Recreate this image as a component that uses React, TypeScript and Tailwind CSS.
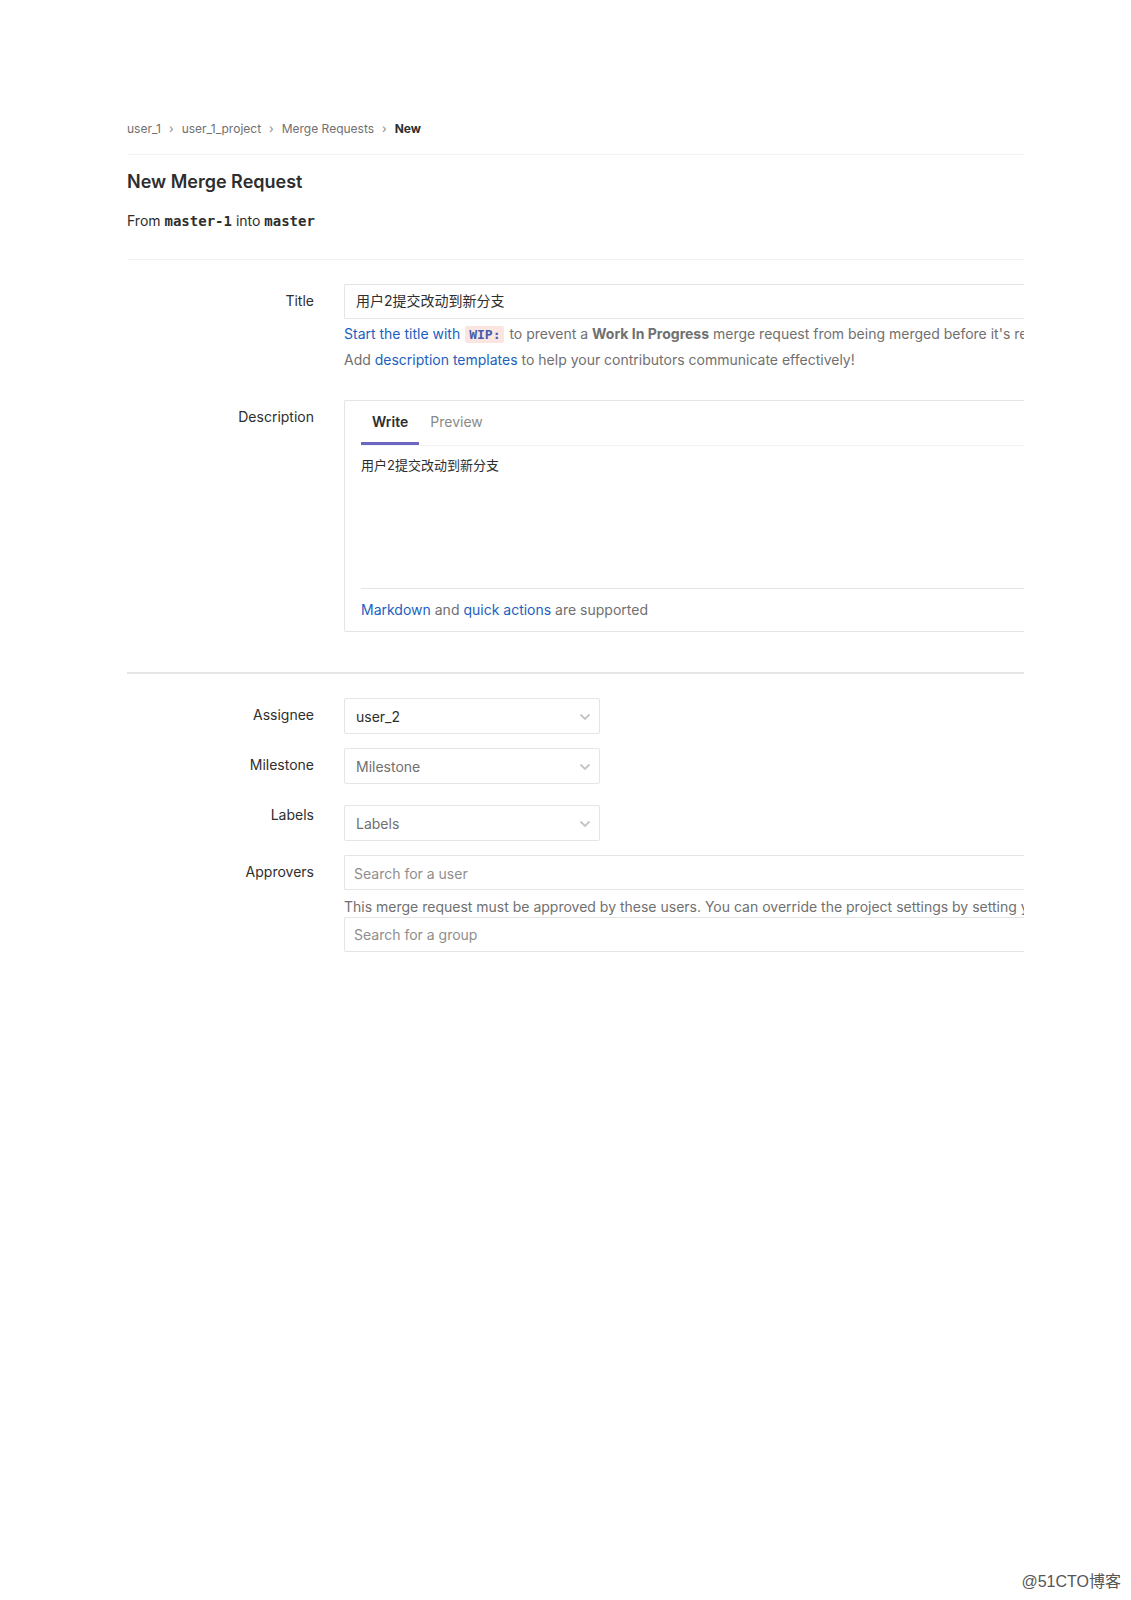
import React from "react";

const sans = "font-['Inter','Noto_Sans_CJK_SC',sans-serif]";

function FormRow({
  id,
  label,
  labelClass = "pt-[7px]",
  className = "",
  children,
}: {
  id: string;
  label: string;
  labelClass?: string;
  className?: string;
  children: React.ReactNode;
}) {
  return (
    <div className={`flex gap-[30px] ${className}`}>
      <label htmlFor={id} className={`w-[187px] shrink-0 text-right text-[#2e2e2e] ${labelClass}`}>
        {label}
      </label>
      <div className="min-w-0 flex-1">{children}</div>
    </div>
  );
}

function Dropdown({ id, value, valueClass }: { id: string; value: string; valueClass: string }) {
  return (
    <div className="relative w-64">
      <select
        id={id}
        defaultValue={value}
        className={`block h-9 w-full appearance-none rounded-xs border border-[#e5e5e5] bg-white pt-px pr-8 pl-[11px] ${valueClass}`}
      >
        <option>{value}</option>
      </select>
      <svg
        className="pointer-events-none absolute top-[15px] right-[9px] h-2 w-3"
        viewBox="0 0 12 8"
        fill="none"
        stroke="#c4c4c4"
        strokeWidth="1.8"
        aria-hidden="true"
      >
        <path d="M1.500 1.500 6 6l4.500-4.500" />
      </svg>
    </div>
  );
}

const field =
  "block h-[35px] w-full rounded-l-xs border border-r-0 border-[#e5e5e5] bg-white outline-none";

export default function App() {
  return (
    <div className={`flex min-h-screen flex-col bg-white text-[14px] leading-5 text-[#2e2e2e] ${sans}`}>
      <main className="flex-1 overflow-hidden pt-[119px] pr-[107px] pl-[127px]">
        <nav aria-label="Breadcrumb" className="border-b border-[#f3f3f3] pb-[15px] text-[12px] text-[#707070]">
          <ol className="flex gap-2">
            <li><a href="#user">user_1</a></li>
            <li aria-hidden="true" className="text-[#8a8a8a]">›</li>
            <li><a href="#project">user_1_project</a></li>
            <li aria-hidden="true" className="text-[#8a8a8a]">›</li>
            <li><a href="#merge-requests">Merge Requests</a></li>
            <li aria-hidden="true" className="text-[#8a8a8a]">›</li>
            <li><a href="#new" className="font-bold text-[#2e2e2e]">New</a></li>
          </ol>
        </nav>

        <h1 className="mt-[15px] text-[18px] leading-6 font-semibold">New Merge Request</h1>
        <p className="mt-[17px] border-b border-[#f3f3f3] pb-7">
          From <b className="font-['DejaVu_Sans_Mono',monospace] text-[14px]">master-1</b> into{" "}
          <b className="font-['DejaVu_Sans_Mono',monospace] text-[14px]">master</b>
        </p>

        <form onSubmit={(e) => e.preventDefault()}>
          <FormRow id="title" label="Title" className="mt-6" labelClass="pt-[7px]">
            <input id="title" defaultValue="用户2提交改动到新分支" className={`${field} px-[11px] pb-1`} />
            <div className="mt-0.5 overflow-hidden whitespace-nowrap text-[#707070]">
              <p className="leading-[25px]">
                <a href="#wip" className="text-[#1b5fc0]">
                  Start the title with{" "}
                  <code className="mx-px rounded-xs bg-[#fbe5e1] px-1 py-px font-['DejaVu_Sans_Mono',monospace] text-[13px] font-bold text-[#3f5fae]">
                    WIP:
                  </code>
                </a>{" "}
                to prevent a <b className="font-bold">Work In Progress</b> merge request from being merged before it's re
              </p>
              <p className="leading-[25px]">
                Add <a href="#templates" className="text-[#1b5fc0]">description templates</a> to help your contributors communicate effectively!
              </p>
            </div>
          </FormRow>

          <FormRow id="description" label="Description" className="mt-7" labelClass="pt-[7px]">
            <div className="rounded-l-xs border border-r-0 border-[#e5e5e5] pl-4">
              <div className="flex border-b border-[#f3f3f3]">
                <button type="button" className="h-11 border-b-[3px] border-[#6b67c0] px-[11px] font-semibold text-[#2e2e2e]">
                  Write
                </button>
                <button type="button" className="h-11 border-b-[3px] border-transparent px-[11px] text-[#8a8a8a]">
                  Preview
                </button>
              </div>
              <textarea
                id="description"
                defaultValue="用户2提交改动到新分支"
                className="block h-[142px] w-full resize-none bg-white pt-[9px] text-[13px] outline-none"
              />
              <p className="border-t border-[#e5e5e5] pt-[11px] pb-[11px] text-[#707070]">
                <a href="#markdown" className="text-[#1b5fc0]">Markdown</a> and{" "}
                <a href="#actions" className="text-[#1b5fc0]">quick actions</a> are supported
              </p>
            </div>
          </FormRow>

          <hr className="mt-10 border-t-2 border-[#e5e5e5]" />

          <FormRow id="assignee" label="Assignee" className="mt-6">
            <Dropdown id="assignee" value="user_2" valueClass="text-[#2e2e2e]" />
          </FormRow>
          <FormRow id="milestone" label="Milestone" className="mt-[14px]">
            <Dropdown id="milestone" value="Milestone" valueClass="text-[#707070]" />
          </FormRow>
          <FormRow id="labels" label="Labels" className="mt-[21px]" labelClass="pt-0">
            <Dropdown id="labels" value="Labels" valueClass="text-[#707070]" />
          </FormRow>
          <FormRow id="approvers" label="Approvers" className="mt-[14px]">
            <input id="approvers" placeholder="Search for a user" className={`${field} px-[9px] pt-px placeholder:text-[#8e8e8e]`} />
            <p className="mt-[7px] overflow-hidden whitespace-nowrap text-[#707070]">
              This merge request must be approved by these users. You can override the project settings by setting y
            </p>
            <input aria-label="Search for a group" placeholder="Search for a group" className={`${field} px-[9px] placeholder:text-[#8e8e8e]`} />
          </FormRow>
        </form>
      </main>

      <footer className="px-[10px] pb-2 text-right font-['Liberation_Sans','Noto_Sans_CJK_SC',sans-serif] text-[16px] text-[#555555]">
        @51CTO博客
      </footer>
    </div>
  );
}
